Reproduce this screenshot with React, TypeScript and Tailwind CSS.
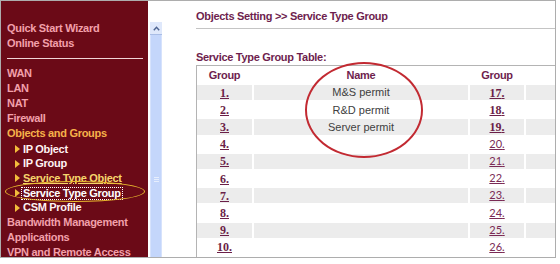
const SANS = "font-['Liberation_Sans',Arial,sans-serif]";

const menuTop = ["Quick Start Wizard", "Online Status"];
const menuMain = ["WAN", "LAN", "NAT", "Firewall"];
const subItems = ["IP Object", "IP Group", "Service Type Object", "Service Type Group", "CSM Profile"];
const menuBottom = ["Bandwidth Management", "Applications", "VPN and Remote Access"];

const names: Record<number, string> = { 1: "M&S permit", 2: "R&D permit", 3: "Server permit" };

function Triangle() {
  return (
    <svg width="5" height="8" viewBox="0 0 5 8" className="shrink-0">
      <path d="M0 0L5 4L0 8Z" fill="#f3bd3c" />
    </svg>
  );
}

function Sidebar() {
  return (
    <div className="w-[147px] shrink-0 bg-[#6b0a17] pl-[6px] pt-[19.5px] text-[11px] font-bold tracking-[-0.3px] leading-[15px]">
      {menuTop.map((m) => (
        <div key={m} className="text-[#f2a0ab] whitespace-nowrap">{m}</div>
      ))}
      <div className="my-[7px] mr-[5px] h-px bg-[#f1d5d8]" />
      {menuMain.map((m) => (
        <div key={m} className="text-[#f2a0ab] whitespace-nowrap">{m}</div>
      ))}
      <div className="text-[#f6b24a] whitespace-nowrap">Objects and Groups</div>
      <div className="pt-[1.5px]">
        {subItems.map((s) => (
          <div key={s} className="flex items-center h-[14.6px] pl-[8px] gap-[3px] whitespace-nowrap">
            <Triangle />
            {s === "Service Type Object" ? (
              <span className="text-[#f6d56c] underline underline-offset-1">{s}</span>
            ) : s === "Service Type Group" ? (
              <span className="text-white border border-dotted border-white -ml-[2px] px-[1px] leading-[11px]">{s}</span>
            ) : (
              <span className="text-[#fff3f3]">{s}</span>
            )}
          </div>
        ))}
      </div>
      {menuBottom.map((m) => (
        <div key={m} className="text-[#f2a0ab] whitespace-nowrap">{m}</div>
      ))}
    </div>
  );
}

function Scrollbar() {
  return (
    <div className="w-[12px] shrink-0 flex flex-col">
      <div className="h-[21px]" />
      <div className="h-[13px] bg-[#dfe8fb] border-b border-[#a9bde6] flex items-center justify-center">
        <svg width="7" height="5" viewBox="0 0 7 5">
          <path d="M0.8 4.2L3.5 1.3L6.2 4.2" fill="none" stroke="#4d6390" strokeWidth="1.4" />
        </svg>
      </div>
      <div className="flex-1 bg-[#c4d6fb] border-x border-[#d6e2fc] flex flex-col items-center pt-[142px] gap-[1px]">
        <div className="w-[5px] h-px bg-[#e6eefd]" />
        <div className="w-[5px] h-px bg-[#e6eefd]" />
        <div className="w-[5px] h-px bg-[#e6eefd]" />
      </div>
    </div>
  );
}

function Num({ n }: { n: number }) {
  if (n >= 20) {
    return <span className="font-['Lato',sans-serif] text-[11px] text-[#7a2a55] underline">{n}.</span>;
  }
  return (
    <span className="font-['Liberation_Serif','Times_New_Roman',serif] font-bold text-[12px] text-[#6b1f48] underline">
      {n}.
    </span>
  );
}

function Content() {
  const rows = Array.from({ length: 10 }, (_, i) => i + 1);
  return (
    <div className="flex-1 flex flex-col pl-[34px]">
      <div className="h-[28px] border-b border-[#c4c4c4] pt-[8px] leading-[15px] text-[11px] font-bold tracking-[-0.3px] text-[#6e1e4e] whitespace-nowrap">
        Objects Setting &gt;&gt; Service Type Group
      </div>
      <div className="h-[36px] pt-[21px] leading-[15px] text-[11px] font-bold tracking-[-0.3px] text-[#6e1e4e] whitespace-nowrap">
        Service Type Group Table:
      </div>
      <div className="flex-1 border-l border-t border-[#b4b4b4]">
        <div className="grid grid-cols-[55px_214px_54px_1fr] gap-x-[2px] h-[19px] items-center text-[11px] font-bold tracking-[-0.3px] text-[#6e1e4e] text-center">
          <div>Group</div>
          <div>Name</div>
          <div>Group</div>
          <div />
        </div>
        <div className="grid grid-cols-[55px_214px_54px_1fr] gap-x-[2px] gap-y-[2px] auto-rows-[15.2px]">
          {rows.map((n) => {
            const bg = n % 2 === 1 ? "bg-[#ececec]" : "bg-white";
            return (
              <div key={n} className="contents">
                <div className={`${bg} flex items-center justify-center`}>
                  <Num n={n} />
                </div>
                <div className={`${bg} flex items-center justify-center text-[11px] text-[#404040]`}>
                  {names[n] ?? ""}
                </div>
                <div className={`${bg} flex items-center justify-center`}>
                  <Num n={n + 16} />
                </div>
                <div className={bg} />
              </div>
            );
          })}
        </div>
      </div>
    </div>
  );
}

export default function App() {
  return (
    <div className={`w-[560px] h-[264px] bg-white overflow-hidden ${SANS}`}>
      <div className="relative flex w-[556px] h-[258px] border border-[#adadad] overflow-hidden">
        <Sidebar />
        <div className="w-[2px] shrink-0" />
        <Scrollbar />
        <Content />
        {/* annotation rings */}
        <div className="absolute left-[4px] top-[180px] w-[140px] h-[21px] rounded-[50%] border-[1.5px] border-[#e9b92e]" />
        <div className="absolute left-[304px] top-[61px] w-[118px] h-[96px] rounded-[50%] border-2 border-[#c22a32]" />
      </div>
    </div>
  );
}
